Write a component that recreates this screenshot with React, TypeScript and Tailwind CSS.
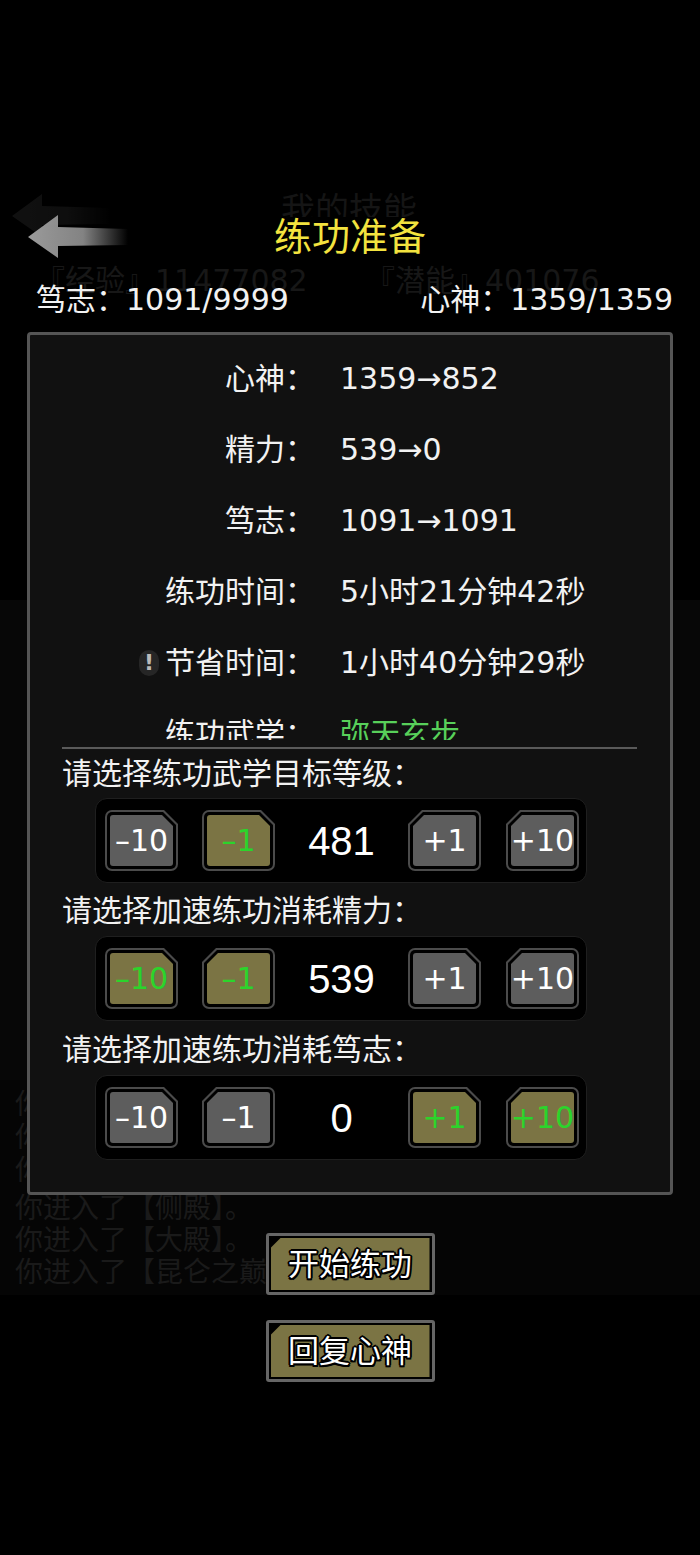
import React from 'react'

type Cut = 'tl' | 'tr'

const stats = [
  { label: '心神：', value: '1359→852' },
  { label: '精力：', value: '539→0' },
  { label: '笃志：', value: '1091→1091' },
  { label: '练功时间：', value: '5小时21分钟42秒' },
  { label: '节省时间：', value: '1小时40分钟29秒', warn: true },
  { label: '练功武学：', value: '弥天玄步', green: true },
]

const bars = [
  {
    title: '请选择练功武学目标等级：',
    value: '481',
    buttons: [
      { text: '–10', olive: false, cut: 'tr' as Cut },
      { text: '–1', olive: true, cut: 'tr' as Cut },
      { text: '+1', olive: false, cut: 'tl' as Cut },
      { text: '+10', olive: false, cut: 'tl' as Cut },
    ],
  },
  {
    title: '请选择加速练功消耗精力：',
    value: '539',
    buttons: [
      { text: '–10', olive: true, cut: 'tr' as Cut },
      { text: '–1', olive: true, cut: 'tl' as Cut },
      { text: '+1', olive: false, cut: 'tr' as Cut },
      { text: '+10', olive: false, cut: 'tl' as Cut },
    ],
  },
  {
    title: '请选择加速练功消耗笃志：',
    value: '0',
    buttons: [
      { text: '–10', olive: false, cut: 'tr' as Cut },
      { text: '–1', olive: false, cut: 'tl' as Cut },
      { text: '+1', olive: true, cut: 'tr' as Cut },
      { text: '+10', olive: true, cut: 'tl' as Cut },
    ],
  },
]

const logs = ['你进入了【侧殿】。', '你进入了【大殿】。', '你进入了【昆仑之巅】。']

function StepButton({ text, olive, cut }: { text: string; olive: boolean; cut: Cut }) {
  const outer =
    cut === 'tr'
      ? '[clip-path:polygon(0_0,calc(100%_-_14px)_0,100%_14px,100%_100%,0_100%)]'
      : '[clip-path:polygon(14px_0,100%_0,100%_100%,0_100%,0_14px)]'
  const middle =
    cut === 'tr'
      ? '[clip-path:polygon(0_0,calc(100%_-_13px)_0,100%_13px,100%_100%,0_100%)]'
      : '[clip-path:polygon(13px_0,100%_0,100%_100%,0_100%,0_13px)]'
  const inner =
    cut === 'tr'
      ? '[clip-path:polygon(0_0,calc(100%_-_11px)_0,100%_11px,100%_100%,0_100%)]'
      : '[clip-path:polygon(11px_0,100%_0,100%_100%,0_100%,0_11px)]'
  return (
    <div className={`w-[73px] h-[61px] shrink-0 p-[2px] bg-[#4b4b4b] rounded-[7px] ${outer}`}>
      <div className={`w-full h-full p-[3px] bg-black rounded-[5px] ${middle}`}>
        <div
          className={`w-full h-full flex items-center justify-center rounded-[3px] text-[30px] leading-none ${inner} ${
            olive ? 'bg-[#7b7444] text-[#2bd42b]' : 'bg-[#5d5d5d] text-white'
          }`}
        >
          {text}
        </div>
      </div>
    </div>
  )
}

function MainButton({ text }: { text: string }) {
  return (
    <div className="w-[169px] h-[62px] mx-auto p-[3px] bg-[#666] rounded-[3px]">
      <div className="w-full h-full p-[2px] bg-black">
        <div className="w-full h-full flex items-center justify-center bg-[#7b7444] [clip-path:polygon(10px_0,100%_0,100%_100%,0_100%,0_10px)]">
          <span className="text-[31px] leading-none text-white [text-shadow:-2px_0_0_#000,2px_0_0_#000,0_-2px_0_#000,0_2px_0_#000,-1.5px_-1.5px_0_#000,1.5px_1.5px_0_#000,-1.5px_1.5px_0_#000,1.5px_-1.5px_0_#000]">
            {text}
          </span>
        </div>
      </div>
    </div>
  )
}

function BackArrow({ color, faded }: { color: string; faded?: boolean }) {
  const id = faded ? 'arrowGhost' : 'arrowMain'
  return (
    <svg width="100" height="43" viewBox="0 0 100 43">
      <defs>
        <linearGradient id={id} x1="0" y1="0" x2="1" y2="0">
          <stop offset="0" stopColor={color} />
          <stop offset="0.55" stopColor={color} stopOpacity="0.85" />
          <stop offset="1" stopColor={color} stopOpacity="0" />
        </linearGradient>
      </defs>
      <path d="M0 22 L30 0 L30 12 L100 14 L100 30 L30 31 L30 43 Z" fill={`url(#${id})`} />
    </svg>
  )
}

function Backdrop() {
  return (
    <div className="absolute inset-0 pointer-events-none">
      <div className="absolute left-0 right-0 top-[600px] h-[480px] bg-[#070707]" />
      <div className="absolute left-0 right-0 top-[1080px] h-[215px] bg-[#050505]" />
      <div className="absolute left-[12px] top-[194px] opacity-40">
        <BackArrow color="#2a2a2a" faded />
      </div>
      <div className="absolute left-[281px] top-[193px] h-[24px] overflow-hidden text-[34px] leading-none text-[#151515]">
        我的技能
      </div>
      <div className="absolute left-[35px] top-[266px] text-[30px] leading-none text-[#171717]">『经验』11477082</div>
      <div className="absolute left-[365px] top-[266px] text-[30px] leading-none text-[#171717]">『潜能』401076</div>
      <div className="absolute left-[15px] top-[1088px] w-[12px] overflow-hidden flex flex-col text-[28px] leading-[33px] text-[#1a1a1a]">
        <div>你</div>
        <div>你</div>
        <div>你</div>
      </div>
      <div className="absolute left-[15px] top-[1193px] flex flex-col text-[28px] leading-[32px] text-[#1a1a1a]">
        {logs.map((l, i) => (
          <div key={i}>{l}</div>
        ))}
      </div>
    </div>
  )
}

export default function App() {
  return (
    <div className="relative w-[700px] min-h-[1555px] bg-black overflow-hidden text-[#f2f2f2] [font-family:'DejaVu_Sans','Noto_Sans_CJK_SC',sans-serif]">
      <Backdrop />

      <div className="relative">
        {/* Header */}
        <div className="relative mt-[212px] h-[50px] flex items-center justify-center">
          <div className="absolute left-[28px] top-[3px]">
            <BackArrow color="#9a9a9a" />
          </div>
          <h1 className="text-[38px] leading-none text-[#f3e33f]">练功准备</h1>
        </div>

        {/* Stats */}
        <div className="mt-[18px] h-[40px] flex items-center justify-between pl-[36px] pr-[27px] text-[30px] leading-none">
          <span>笃志：1091/9999</span>
          <span>心神：1359/1359</span>
        </div>

        {/* Panel */}
        <div className="mx-[27px] mt-[12px] border-[3px] border-[#555] rounded-[4px] bg-[#111]">
          <div className="h-[405px] overflow-hidden pt-[8px]">
            {stats.map((s, i) => (
              <div key={i} className="h-[71px] flex items-center text-[30px] leading-none">
                <div className="w-[285px] flex items-center justify-end">
                  {s.warn && (
                    <span className="mr-[6px] w-[20px] h-[26px] rounded-full bg-[#262626] flex items-center justify-center text-[22px] font-bold text-[#bbb]">
                      !
                    </span>
                  )}
                  <span>{s.label}</span>
                </div>
                <div className={`ml-[25px] ${s.green ? 'text-[#58d05a]' : ''}`}>{s.value}</div>
              </div>
            ))}
          </div>

          <div className="mt-[7px] ml-[32px] mr-[33px] h-[2px] bg-[#5a5a5a]" />

          {bars.map((b, i) => (
            <div key={i}>
              <div
                className={`flex items-center pl-[32px] text-[30px] leading-none ${
                  i === 0 ? 'h-[49px]' : i === 1 ? 'h-[53px] pt-[3px]' : 'h-[54px] pt-[3px]'
                }`}
              >
                {b.title}
              </div>
              <div className="ml-[65px] w-[492px] h-[85px] flex items-center pl-[9px] bg-black border border-[#1f1f1f] rounded-[12px]">
                <StepButton {...b.buttons[0]} />
                <div className="ml-[24px]">
                  <StepButton {...b.buttons[1]} />
                </div>
                <div className="w-[133px] text-center text-[40px] leading-none text-white [font-family:'Liberation_Sans',sans-serif]">
                  {b.value}
                </div>
                <StepButton {...b.buttons[2]} />
                <div className="ml-[25px]">
                  <StepButton {...b.buttons[3]} />
                </div>
              </div>
            </div>
          ))}
          <div className="h-[32px]" />
        </div>

        {/* Actions */}
        <div className="mt-[38px]">
          <MainButton text="开始练功" />
        </div>
        <div className="mt-[25px]">
          <MainButton text="回复心神" />
        </div>
      </div>
    </div>
  )
}
